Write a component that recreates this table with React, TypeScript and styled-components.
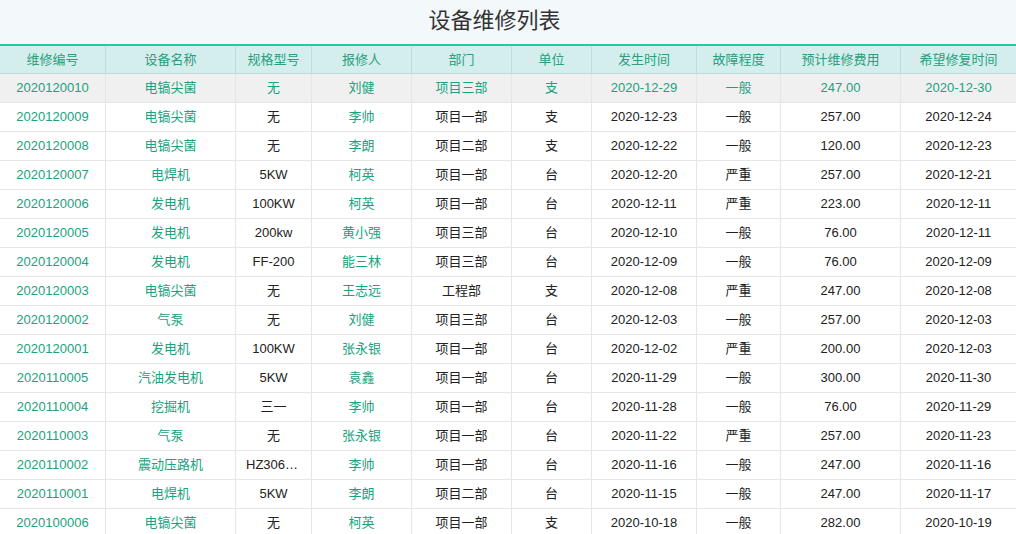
import React from "react";
import styled, { createGlobalStyle } from "styled-components";

const GlobalStyle = createGlobalStyle`
  html, body { margin: 0; padding: 0; background: #ffffff; }
  body {
    font-family: "Liberation Sans", "Noto Sans CJK SC", sans-serif;
    overflow: hidden;
  }
`;

const Page = styled.div`
  width: 1016px;
  height: 534px;
  overflow: hidden;
  display: flex;
  flex-direction: column;
`;

const TitleBar = styled.div`
  height: 44px;
  flex: 0 0 44px;
  background: #f3f8fa;
  display: flex;
  align-items: center;
  justify-content: center;
  padding: 0 27px 9px 0;
  box-sizing: border-box;
`;

const Title = styled.h1`
  margin: 0;
  font-size: 22px;
  font-weight: normal;
  color: #333333;
  font-family: "Noto Sans CJK SC", "Liberation Sans", sans-serif;
`;

const COLS = "106px 130px 76px 100px 100px 80px 105px 84px 120px 1fr";

const Table = styled.div`
  border-top: 2px solid #1ccf9c;
  display: flex;
  flex-direction: column;
`;

const Row = styled.div<{ $head?: boolean; $active?: boolean }>`
  display: grid;
  grid-template-columns: ${COLS};
  height: ${(p) => (p.$head ? 28 : 29)}px;
  background: ${(p) => (p.$head ? "#d3eeec" : p.$active ? "#f0f0f0" : "#ffffff")};
`;

const Cell = styled.div<{ $head?: boolean; $green?: boolean }>`
  box-sizing: border-box;
  border-right: 1px solid ${(p) => (p.$head ? "#bcdedb" : "#e6e6e6")};
  border-bottom: 1px solid ${(p) => (p.$head ? "#bcdedb" : "#e6e6e6")};
  padding: 0 10px;
  font-size: 13px;
  line-height: 28px;
  text-align: center;
  white-space: nowrap;
  overflow: hidden;
  text-overflow: ellipsis;
  color: ${(p) => (p.$head ? "#2a9e7e" : p.$green ? "#1ba27e" : "#222222")};
  &:last-child { border-right: none; }
`;

const headers = [
  "维修编号",
  "设备名称",
  "规格型号",
  "报修人",
  "部门",
  "单位",
  "发生时间",
  "故障程度",
  "预计维修费用",
  "希望修复时间",
];

const rows: string[][] = [
  ["2020120010", "电镐尖菌", "无", "刘健", "项目三部", "支", "2020-12-29", "一般", "247.00", "2020-12-30"],
  ["2020120009", "电镐尖菌", "无", "李帅", "项目一部", "支", "2020-12-23", "一般", "257.00", "2020-12-24"],
  ["2020120008", "电镐尖菌", "无", "李朗", "项目二部", "支", "2020-12-22", "一般", "120.00", "2020-12-23"],
  ["2020120007", "电焊机", "5KW", "柯英", "项目一部", "台", "2020-12-20", "严重", "257.00", "2020-12-21"],
  ["2020120006", "发电机", "100KW", "柯英", "项目一部", "台", "2020-12-11", "严重", "223.00", "2020-12-11"],
  ["2020120005", "发电机", "200kw", "黄小强", "项目三部", "台", "2020-12-10", "一般", "76.00", "2020-12-11"],
  ["2020120004", "发电机", "FF-200", "能三林", "项目三部", "台", "2020-12-09", "一般", "76.00", "2020-12-09"],
  ["2020120003", "电镐尖菌", "无", "王志远", "工程部", "支", "2020-12-08", "严重", "247.00", "2020-12-08"],
  ["2020120002", "气泵", "无", "刘健", "项目三部", "台", "2020-12-03", "一般", "257.00", "2020-12-03"],
  ["2020120001", "发电机", "100KW", "张永银", "项目一部", "台", "2020-12-02", "严重", "200.00", "2020-12-03"],
  ["2020110005", "汽油发电机", "5KW", "袁鑫", "项目一部", "台", "2020-11-29", "一般", "300.00", "2020-11-30"],
  ["2020110004", "挖掘机", "三一", "李帅", "项目一部", "台", "2020-11-28", "一般", "76.00", "2020-11-29"],
  ["2020110003", "气泵", "无", "张永银", "项目一部", "台", "2020-11-22", "严重", "257.00", "2020-11-23"],
  ["2020110002", "震动压路机", "HZ306-100", "李帅", "项目一部", "台", "2020-11-16", "一般", "247.00", "2020-11-16"],
  ["2020110001", "电焊机", "5KW", "李朗", "项目二部", "台", "2020-11-15", "一般", "247.00", "2020-11-17"],
  ["2020100006", "电镐尖菌", "无", "柯英", "项目一部", "支", "2020-10-18", "一般", "282.00", "2020-10-19"],
];

const greenCols = new Set([0, 1, 3]);

export default function App() {
  return (
    <Page>
      <GlobalStyle />
      <TitleBar>
        <Title>设备维修列表</Title>
      </TitleBar>
      <Table>
        <Row $head>
          {headers.map((h) => (
            <Cell key={h} $head>
              {h}
            </Cell>
          ))}
        </Row>
        {rows.map((r, i) => (
          <Row key={r[0]} $active={i === 0}>
            {r.map((v, j) => (
              <Cell key={j} $green={i === 0 || greenCols.has(j)}>
                {v}
              </Cell>
            ))}
          </Row>
        ))}
      </Table>
    </Page>
  );
}
